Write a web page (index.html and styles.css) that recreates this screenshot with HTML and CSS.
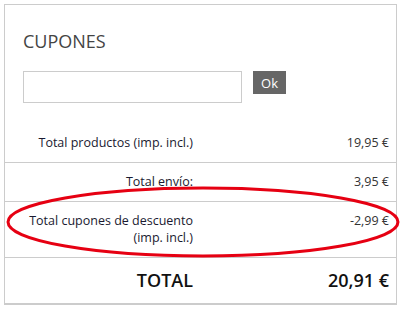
FILE: index.html
```html
<!DOCTYPE html>
<html lang="es">
<head>
  <meta charset="UTF-8" />
  <title>Cupones</title>
  <link rel="stylesheet" href="styles.css">
</head>
<body>
  <div class="panel">
    <div class="coupons">
      <h3>CUPONES</h3>
      <form class="coupon-form">
        <input type="text" class="coupon-input" />
        <button type="button" class="coupon-btn">Ok</button>
      </form>
    </div>

    <div class="totals">
      <div class="row">
        <span class="label">Total productos (imp. incl.)</span>
        <span class="value">19,95 €</span>
      </div>
      <div class="row">
        <span class="label">Total envío:</span>
        <span class="value">3,95 €</span>
      </div>
      <div class="row">
        <span class="label">Total cupones de descuento<br>(imp. incl.)</span>
        <span class="value">-2,99 €</span>
      </div>
      <div class="row total">
        <span class="label">TOTAL</span>
        <span class="value">20,91 €</span>
      </div>
    </div>
  </div>

  <!-- red mark drawn over the discount row -->
  <svg class="mark" width="402" height="309" viewBox="0 0 402 309">
    <ellipse cx="203" cy="222" rx="195" ry="34" fill="none" stroke="#e60012" stroke-width="3" />
  </svg>
</body>
</html>
```

FILE: styles.css
```css
body {
  font-family: "Open Sans", "Liberation Sans", sans-serif;
  background-color: white;
  color: #333;
  margin: 0;
  padding: 4px 0 0 4px;
}

.panel {
  width: 393px;
  box-sizing: border-box;
  border: 1px solid #ccc;
  border-bottom: 2px solid #ccc;
}

.coupons {
  padding: 24px 0 0 18px;
}

.coupons h3 {
  margin: 0;
  font-size: 18px;
  line-height: 24px;
  font-weight: 400;
  color: #444;
}

.coupon-form {
  display: flex;
  align-items: flex-start;
  gap: 11px;
  margin-top: 18px;
}

.coupon-input {
  width: 219px;
  height: 32px;
  box-sizing: border-box;
  border: 1px solid #ccc;
  margin: 0;
  padding: 0 6px;
}

.coupon-btn {
  width: 33px;
  height: 23px;
  border: none;
  margin: 0;
  padding: 0;
  background-color: #666;
  color: white;
  font-family: inherit;
  font-size: 13px;
}

.totals {
  margin-top: 21px;
}

.row {
  display: grid;
  grid-template-columns: 188px 1fr;
  padding: 10px 7px 11px 0;
  font-size: 12.5px;
  line-height: 17px;
  border-bottom: 1px solid #ccc;
}

.row:last-child {
  border-bottom: none;
}

.row .label {
  text-align: right;
  color: #1a1a30;
}

.row .value {
  text-align: right;
  color: #333;
}

.row.total {
  font-size: 18px;
  line-height: 24px;
  font-weight: 600;
}

.row.total .label,
.row.total .value {
  color: #111;
}

.mark {
  position: absolute;
  top: 0;
  left: 0;
  pointer-events: none;
}
```
